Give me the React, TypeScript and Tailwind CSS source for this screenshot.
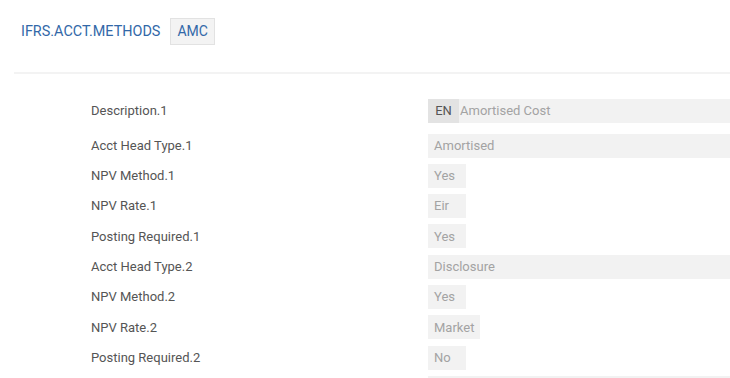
import React from "react";

type Row = { label: string; value: string; wide?: boolean };

const rows: Row[] = [
  { label: "Acct Head Type.1", value: "Amortised", wide: true },
  { label: "NPV Method.1", value: "Yes" },
  { label: "NPV Rate.1", value: "Eir" },
  { label: "Posting Required.1", value: "Yes" },
  { label: "Acct Head Type.2", value: "Disclosure", wide: true },
  { label: "NPV Method.2", value: "Yes" },
  { label: "NPV Rate.2", value: "Market" },
  { label: "Posting Required.2", value: "No" },
  { label: "", value: "", wide: true },
];

function Field({ row }: { row: Row }) {
  if (row.wide) {
    return (
      <div className="flex-1 h-[24px] bg-[#f2f2f2] px-[6px] flex items-center text-[13px] text-[#a3a3a3]">
        {row.value}
      </div>
    );
  }
  return (
    <div className="h-[24px] min-w-[38px] bg-[#f2f2f2] px-[6px] flex items-center text-[13px] text-[#a3a3a3]">
      {row.value}
    </div>
  );
}

export default function App() {
  return (
    <div className="w-[730px] h-[378px] overflow-hidden bg-white font-['Roboto',sans-serif]">
      {/* Header */}
      <div className="flex items-center gap-[10px] pt-[18px] pl-[21px]">
        <span className="text-[14.4px] text-[#3268a8]">IFRS.ACCT.METHODS</span>
        <span className="h-[27px] px-[6px] flex items-center border border-[#e2e2e2] bg-[#f3f3f3] text-[14px] text-[#3268a8]">
          AMC
        </span>
      </div>

      <div className="mt-[27px] ml-[14px] h-[2px] bg-[#f3f3f3]" />

      {/* Form rows */}
      <div className="pt-[24.5px] flex flex-col">
        <div className="flex items-center h-[24px] mb-[11px]">
          <div className="w-[428px] shrink-0 pl-[91px] text-[13px] text-[#555]">Description.1</div>
          <div className="flex-1 h-[24px] bg-[#f2f2f2] flex items-center text-[13px]">
            <span className="w-[31px] h-full bg-[#e3e3e3] flex items-center justify-center text-[#555]">EN</span>
            <span className="pl-[1px] text-[#a3a3a3]">Amortised Cost</span>
          </div>
        </div>
        <div className="flex flex-col gap-[6.33px]">
          {rows.map((row, i) => (
            <div key={i} className="flex items-center h-[24px]">
              <div className="w-[428px] shrink-0 pl-[91px] text-[13px] text-[#555]">{row.label}</div>
              <Field row={row} />
            </div>
          ))}
        </div>
      </div>
    </div>
  );
}
